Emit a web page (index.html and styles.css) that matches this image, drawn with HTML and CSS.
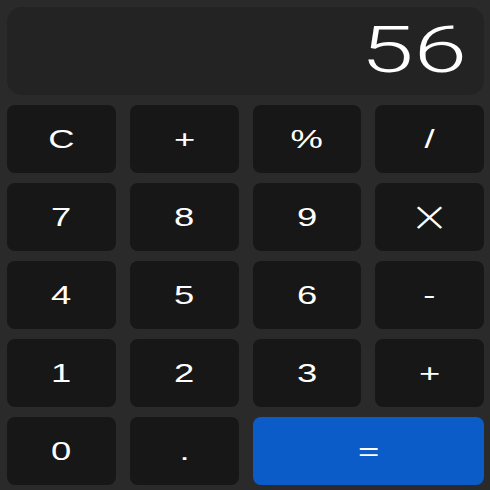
FILE: index.html
```html
<!DOCTYPE html>
<html>
<head>
<meta charset="utf-8">
<link rel="stylesheet" href="styles.css">
</head>
<body>
<div class="calc">
  <div class="display"><span class="value">56</span></div>
  <div class="keys">
    <div class="key"><span class="label">C</span></div>
    <div class="key"><span class="label">+</span></div>
    <div class="key"><span class="label">%</span></div>
    <div class="key"><span class="label">/</span></div>
    <div class="key"><span class="label">7</span></div>
    <div class="key"><span class="label">8</span></div>
    <div class="key"><span class="label">9</span></div>
    <div class="key"><span class="label times">×</span></div>
    <div class="key"><span class="label">4</span></div>
    <div class="key"><span class="label">5</span></div>
    <div class="key"><span class="label">6</span></div>
    <div class="key"><span class="label">-</span></div>
    <div class="key"><span class="label">1</span></div>
    <div class="key"><span class="label">2</span></div>
    <div class="key"><span class="label">3</span></div>
    <div class="key"><span class="label">+</span></div>
    <div class="key"><span class="label">0</span></div>
    <div class="key"><span class="label">.</span></div>
    <div class="key equals"><span class="label">=</span></div>
  </div>
</div>
</body>
</html>
```
FILE: styles.css
```css
html, body {
  margin: 0;
  padding: 0;
  background: #2a2a2a;
}
.calc {
  width: 490px;
  height: 490px;
  box-sizing: border-box;
  padding: 7px 6px 5px 7px;
  display: flex;
  flex-direction: column;
  gap: 10px;
  font-family: "Liberation Sans", Arial, sans-serif;
  color: #ffffff;
}
.display {
  height: 88px;
  background: #232323;
  border-radius: 15px;
  box-sizing: border-box;
  padding-right: 17px;
  display: flex;
  align-items: center;
  justify-content: flex-end;
}
.value {
  display: inline-block;
  font-family: Roboto, "Liberation Sans", sans-serif;
  font-weight: 300;
  font-size: 64px;
  line-height: 1;
  transform: scaleX(1.5);
  transform-origin: right center;
}
.keys {
  display: grid;
  grid-template-columns: repeat(4, 1fr);
  grid-auto-rows: 68px;
  column-gap: 14px;
  row-gap: 10px;
}
.key {
  background: #171717;
  border-radius: 8px;
  display: flex;
  align-items: center;
  justify-content: center;
}
.label {
  display: inline-block;
  font-size: 26px;
  line-height: 1;
  transform: scaleX(1.4);
}
.label.times {
  font-size: 42px;
  font-weight: 300;
  font-family: "DejaVu Sans", sans-serif;
  transform: scaleX(1.15);
}
.equals {
  grid-column: span 2;
  background: #0b5bc9;
}
```
